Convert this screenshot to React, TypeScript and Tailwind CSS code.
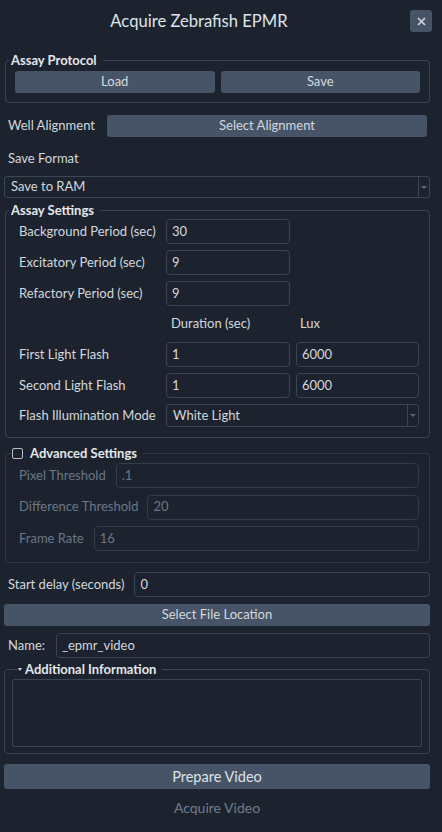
import React from "react";

const Input = ({ value, className = "", dim = false }: { value: string; className?: string; dim?: boolean }) => (
  <div
    className={`h-[25px] border border-[#3a4556] rounded-[4px] flex items-center px-[5px] ${dim ? "text-[#6b7687]" : "text-[#d3d8df]"} ${className}`}
  >
    {value}
  </div>
);

const Btn = ({ children, className = "" }: { children: React.ReactNode; className?: string }) => (
  <div className={`h-[22px] bg-[#475467] rounded-[3px] flex items-center justify-center text-[#d3d8df] ${className}`}>
    {children}
  </div>
);

const Select = ({ value, className = "" }: { value: string; className?: string }) => (
  <div className={`h-[22px] border border-[#3a4556] rounded-[3px] flex items-center text-[#d3d8df] ${className}`}>
    <div className="flex-1 px-[6px]">{value}</div>
    <div className="w-[11px] h-full border-l border-[#3a4556] flex items-center justify-center">
      <div className="w-0 h-0 border-l-[3px] border-r-[3px] border-t-[3px] border-l-transparent border-r-transparent border-t-[#5b6677]" />
    </div>
  </div>
);

export default function App() {
  return (
    <div className="w-[442px] h-[832px] bg-[#1c232e] text-[#d3d8df] text-[13px] overflow-hidden font-['Lato','Liberation_Sans',sans-serif]">
      {/* header */}
      <div className="flex items-start pt-[10px] h-[53px]">
        <div className="flex-1 text-center text-[16.6px] leading-[22px] text-[#dfe3e8] pr-[12px]">Acquire Zebrafish EPMR</div>
        <div className="w-[22px] h-[22px] mr-[10px] bg-[#475467] rounded-[3px] flex items-center justify-center">
          <svg width="9" height="9" viewBox="0 0 9 9">
            <path d="M1 1L8 8M8 1L1 8" stroke="#d3d8df" strokeWidth="1.6" />
          </svg>
        </div>
      </div>

      <div className="pl-[4px] pr-[12px]">
        {/* Assay Protocol */}
        <fieldset className="ml-[1px] border border-[#3a4556] rounded-[4px] px-[9px] pb-[9px]">
          <legend className="ml-[-6px] pl-[2px] pr-[6px] font-bold text-[13px] text-[#e4e7eb] leading-[14px]">Assay Protocol</legend>
          <div className="flex gap-[6px] pt-[4px]">
            <Btn className="flex-1">Load</Btn>
            <Btn className="flex-1">Save</Btn>
          </div>
        </fieldset>

        {/* Well alignment */}
        <div className="flex items-center mt-[12px]">
          <div className="w-[103px] pl-[4px]">Well Alignment</div>
          <Btn className="w-[320px]">Select Alignment</Btn>
        </div>

        <div className="pl-[4px] h-[21px] mt-[11px] flex items-center">Save Format</div>
        <Select value="Save to RAM" className="mt-[7px]" />

        {/* Assay Settings */}
        <fieldset className="ml-[1px] mt-[5px] border border-[#3a4556] rounded-[4px] pl-[13px] pr-[10px] pb-[10px]">
          <legend className="ml-[-10px] pl-[2px] pr-[6px] font-bold text-[13px] text-[#e4e7eb] leading-[14px]">Assay Settings</legend>
          <div className="grid grid-cols-[141px_124px_123px] gap-x-[6px] gap-y-[6.2px] items-center pt-[2px]">
            <div>Background Period (sec)</div>
            <Input value="30" />
            <div />
            <div>Excitatory Period (sec)</div>
            <Input value="9" />
            <div />
            <div>Refactory Period (sec)</div>
            <Input value="9" />
            <div />
            <div />
            <div className="h-[23px] flex items-center pl-[5px]">Duration (sec)</div>
            <div className="h-[23px] flex items-center pl-[4px]">Lux</div>
            <div>First Light Flash</div>
            <Input value="1" />
            <Input value="6000" />
            <div>Second Light Flash</div>
            <Input value="1" />
            <Input value="6000" />
            <div>Flash Illumination Mode</div>
            <Select value="White Light" className="col-span-2 h-[23px]" />
          </div>
        </fieldset>

        {/* Advanced Settings */}
        <fieldset className="ml-[1px] mt-[8px] border border-[#2f3947] rounded-[4px] pl-[13px] pr-[10px] pb-[11px]">
          <legend className="ml-[-7px] pr-[6px] font-bold text-[13px] text-[#e4e7eb] leading-[14px] flex items-center">
            <span className="w-[11px] h-[11px] border border-[#b8bec7] rounded-[2px] mr-[7px] inline-block" />
            Advanced Settings
          </legend>
          <div className="flex flex-col gap-[6.5px] text-[#6b7687] pt-[3px]">
            <div className="flex items-center gap-[10px]">
              <span>Pixel Threshold</span>
              <Input value=".1" dim className="flex-1 border-[#323c4b]" />
            </div>
            <div className="flex items-center gap-[9px]">
              <span>Difference Threshold</span>
              <Input value="20" dim className="flex-1 border-[#323c4b]" />
            </div>
            <div className="flex items-center gap-[10px]">
              <span>Frame Rate</span>
              <Input value="16" dim className="flex-1 border-[#323c4b]" />
            </div>
          </div>
        </fieldset>

        {/* Start delay */}
        <div className="flex items-center gap-[10px] mt-[9px] pl-[4px]">
          <span>Start delay (seconds)</span>
          <Input value="0" className="flex-1" />
        </div>
        <Btn className="mt-[7px]">Select File Location</Btn>
        <div className="flex items-center gap-[11px] mt-[7px] pl-[4px]">
          <span>Name:</span>
          <Input value="_epmr_video" className="flex-1" />
        </div>

        {/* Additional Information */}
        <fieldset className="mt-[4px] border border-[#3a4556] rounded-[4px] px-[7px] pb-[6px]">
          <legend className="ml-[6px] pr-[6px] font-bold text-[13px] text-[#e4e7eb] leading-[14px] flex items-center">
            <span className="w-0 h-0 border-l-[2px] border-r-[2px] border-t-[3px] border-l-transparent border-r-transparent border-t-[#d3d8df] mr-[3px]" />
            Additional Information
          </legend>
          <div className="h-[68px] border border-[#3a4556] rounded-[2px] mt-[3px]" />
        </fieldset>

        <div className="mt-[10px] h-[25px] bg-[#475467] rounded-[3px] flex items-center justify-center text-[14.5px] text-[#dfe3e8]">
          Prepare Video
        </div>
        <div className="mt-[8px] text-center text-[14px] text-[#717c8c]">Acquire Video</div>
      </div>
    </div>
  );
}
